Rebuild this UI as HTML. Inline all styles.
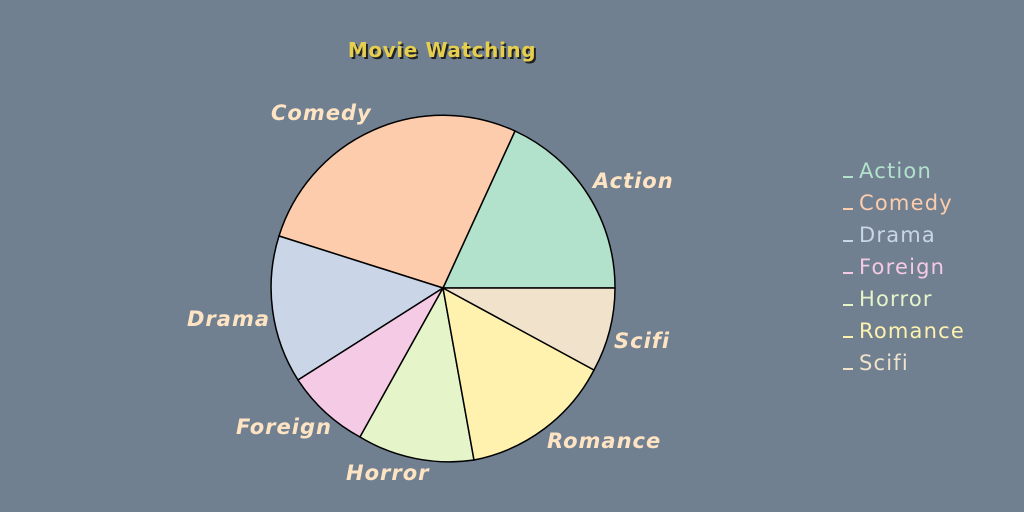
<!DOCTYPE html>
<html><head><style>
html,body{margin:0;padding:0;background:#708090;width:1024px;height:512px;overflow:hidden}
svg{display:block}
.lbl{font-family:"DejaVu Sans","Liberation Sans",sans-serif;font-style:italic;font-weight:bold;font-size:21px;fill:#ffe4c4;letter-spacing:1px}
.lg{font-family:"DejaVu Sans","Liberation Sans",sans-serif;font-size:21px;letter-spacing:1.2px}
</style></head><body>
<svg width="1024" height="512" viewBox="0 0 1024 512">
<text x="444" y="59" text-anchor="middle" font-family="DejaVu Sans,Liberation Sans,sans-serif" font-weight="bold" font-size="20" letter-spacing="0.6" fill="#222">Movie Watching</text>
<text x="442" y="57" text-anchor="middle" font-family="DejaVu Sans,Liberation Sans,sans-serif" font-weight="bold" font-size="20" letter-spacing="0.6" fill="#e6cf4e">Movie Watching</text>
<g stroke="#000" stroke-width="1.5">
<path d="M443,288 L615,288 A172,172 0 0 0 515,131 Z" fill="#b2e2cc"/>
<path d="M443,288 L515,131 A172,172 0 0 0 279,236 Z" fill="#fdccac"/>
<path d="M443,288 L279,236 A172,172 0 0 0 298,380 Z" fill="#cbd5e8"/>
<path d="M443,288 L298,380 A172,172 0 0 0 360,437 Z" fill="#f4cae4"/>
<path d="M443,288 L360,437 A172,172 0 0 0 474,460 Z" fill="#e6f5c9"/>
<path d="M443,288 L474,460 A172,172 0 0 0 594,370 Z" fill="#fff2ae"/>
<path d="M443,288 L594,370 A172,172 0 0 0 615,288 Z" fill="#f1e2cc"/>
</g>
<text class="lbl" x="593" y="188">Action</text>
<text class="lbl" x="271" y="120">Comedy</text>
<text class="lbl" x="187" y="326">Drama</text>
<text class="lbl" x="236" y="434">Foreign</text>
<text class="lbl" x="346" y="480">Horror</text>
<text class="lbl" x="547" y="448">Romance</text>
<text class="lbl" x="614" y="348">Scifi</text>
<g class="lg">
<rect x="843" y="176" width="10" height="2" fill="#b2e2cc"/><text x="859" y="178" fill="#b2e2cc">Action</text>
<rect x="843" y="208" width="10" height="2" fill="#fdccac"/><text x="859" y="210" fill="#fdccac">Comedy</text>
<rect x="843" y="240" width="10" height="2" fill="#cbd5e8"/><text x="859" y="242" fill="#cbd5e8">Drama</text>
<rect x="843" y="272" width="10" height="2" fill="#f4cae4"/><text x="859" y="274" fill="#f4cae4">Foreign</text>
<rect x="843" y="304" width="10" height="2" fill="#e6f5c9"/><text x="859" y="306" fill="#e6f5c9">Horror</text>
<rect x="843" y="336" width="10" height="2" fill="#fff2ae"/><text x="859" y="338" fill="#fff2ae">Romance</text>
<rect x="843" y="368" width="10" height="2" fill="#f1e2cc"/><text x="859" y="370" fill="#f1e2cc">Scifi</text>
</g>
</svg>
</body></html>
